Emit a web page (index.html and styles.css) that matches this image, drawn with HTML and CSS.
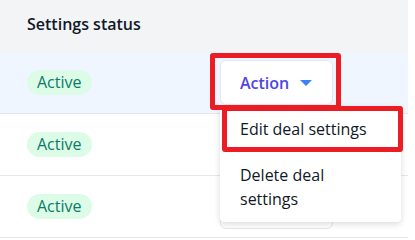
FILE: index.html
```html
<!DOCTYPE html>
<html lang="en">
<head>
<meta charset="utf-8">
<title>Settings status</title>
<link rel="stylesheet" href="styles.css">
</head>
<body>
<div class="table">
  <div class="thead">Settings status</div>
  <div class="row row-highlight">
    <div class="status"><span class="badge">Active</span></div>
    <div class="actions">
      <button class="action-btn" type="button">Action
        <svg class="caret" width="12" height="6" viewBox="0 0 12 6"><path d="M0 0h12L6 6z" fill="#3b82f6"/></svg>
      </button>
      <span class="mark mark-btn"></span>
      <ul class="menu">
        <li class="menu-item">Edit deal settings<span class="mark mark-item"></span></li>
        <li class="menu-item">Delete deal settings</li>
      </ul>
    </div>
  </div>
  <div class="row">
    <div class="status"><span class="badge">Active</span></div>
    <div class="actions">
      <button class="action-btn" type="button">Action
        <svg class="caret" width="12" height="6" viewBox="0 0 12 6"><path d="M0 0h12L6 6z" fill="#3b82f6"/></svg>
      </button>
    </div>
  </div>
  <div class="row">
    <div class="status"><span class="badge">Active</span></div>
    <div class="actions">
      <button class="action-btn" type="button">Action
        <svg class="caret" width="12" height="6" viewBox="0 0 12 6"><path d="M0 0h12L6 6z" fill="#3b82f6"/></svg>
      </button>
    </div>
  </div>
</div>
</body>
</html>
```
FILE: styles.css
```css
* { box-sizing: border-box; }
html, body { margin: 0; padding: 0; background: #fff; }
body {
  font-family: "Open Sans", "Noto Sans", sans-serif;
  color: #111827;
  overflow: hidden;
}
.table { width: 408px; }
.thead {
  height: 52px;
  background: #f3f4f6;
  padding: 12px 27px 0;
  font-size: 16px;
  font-weight: 600;
  line-height: 24px;
  color: #111827;
}
.row {
  height: 62px;
  display: flex;
  align-items: center;
  border-bottom: 1px solid #e5e7eb;
}
.row-highlight { background: #eff6ff; }
.status { width: 220px; padding-left: 27px; }
.badge {
  display: inline-block;
  height: 25px;
  line-height: 25px;
  padding: 0 10px;
  border-radius: 13px;
  background: #dcfce7;
  color: #0b7a68;
  font-size: 16px;
}
.actions { position: relative; }
.action-btn {
  display: flex;
  align-items: center;
  width: 113px;
  height: 45px;
  padding: 0 0 0 19px;
  border: 1px solid #e5e7eb;
  border-radius: 6px;
  background: #fff;
  font-family: inherit;
  font-size: 16px;
  font-weight: 600;
  color: #4f46e5;
}
.caret { margin-left: 11px; }
.mark {
  position: absolute;
  border: 5px solid #ec1c24;
  border-radius: 3px;
  pointer-events: none;
}
.mark-btn { left: -10px; top: -7px; width: 131px; height: 57px; z-index: 3; }
.menu {
  position: absolute;
  left: 0;
  top: 46px;
  width: 181px;
  margin: 0;
  padding: 0;
  list-style: none;
  background: #fff;
  border-radius: 4px;
  box-shadow: 0 2px 6px rgba(0,0,0,0.15);
  z-index: 2;
}
.menu-item {
  position: relative;
  padding: 11px 20px;
  font-size: 16px;
  line-height: 24px;
  color: #111827;
}
.mark-item { left: 2px; top: 0; width: 181px; height: 46px; }
```
